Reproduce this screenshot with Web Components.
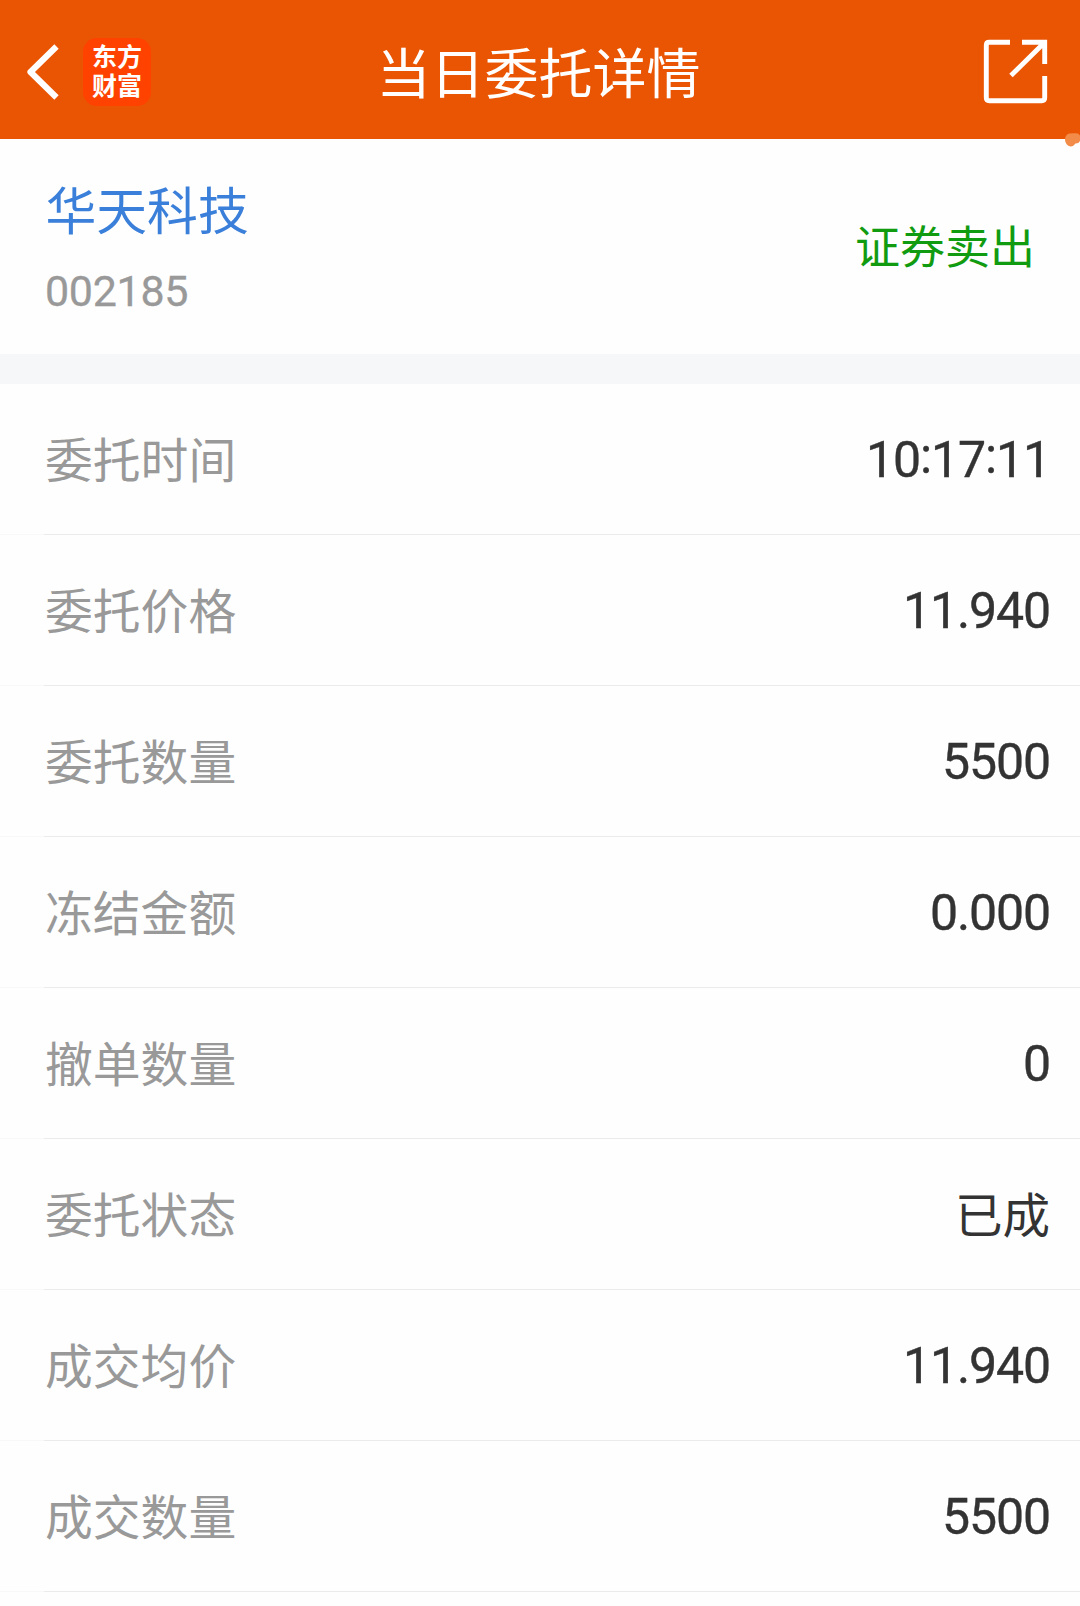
<!DOCTYPE html>
<html lang="zh-CN">
<head>
<meta charset="UTF-8">
<title>当日委托详情</title>
<style>
    body {
        margin: 0;
        background: #fefefe;
        color: #333;
        font-family: Roboto, "Noto Sans CJK SC", sans-serif;
    }
</style>
</head>
<body>
<order-page>
    <nav-bar slot="header">当日委托详情</nav-bar>
    <stock-summary name="华天科技" code="002185">证券卖出</stock-summary>
    <detail-row label="委托时间">10<raised-colon>:</raised-colon>17<raised-colon>:</raised-colon>11</detail-row>
    <detail-row label="委托价格">11.940</detail-row>
    <detail-row label="委托数量">5500</detail-row>
    <detail-row label="冻结金额">0.000</detail-row>
    <detail-row label="撤单数量">0</detail-row>
    <detail-row label="委托状态" cjk>已成</detail-row>
    <detail-row label="成交均价">11.940</detail-row>
    <detail-row label="成交数量">5500</detail-row>
</order-page>

<script>
class OrderPage extends HTMLElement {
    constructor() {
        super();
        const shadow = this.attachShadow({ mode: 'open' });
        shadow.innerHTML = `
            <style>
                :host {
                    display: flex;
                    flex-direction: column;
                    height: 1606px;
                    overflow: hidden;
                }
            </style>
            <slot name="header"></slot>
            <slot></slot>
        `;
    }
}

class AppLogo extends HTMLElement {
    constructor() {
        super();
        const shadow = this.attachShadow({ mode: 'open' });
        shadow.innerHTML = `
            <style>
                :host {
                    display: flex;
                    align-items: center;
                    justify-content: center;
                    box-sizing: border-box;
                    width: 68px;
                    height: 68px;
                    padding-bottom: 3px;
                    border-radius: 14px;
                    background: #ff4200;
                    color: #fff;
                    font: 700 25px/29px "Noto Sans CJK SC", sans-serif;
                }
                /* 两字一行 */
                span {
                    width: 50px;
                    word-break: break-all;
                }
            </style>
            <span>东方财富</span>
        `;
    }
}

class NavBar extends HTMLElement {
    constructor() {
        super();
        const shadow = this.attachShadow({ mode: 'open' });
        shadow.innerHTML = `
            <style>
                :host {
                    position: relative;
                    display: grid;
                    grid-template-columns: 1fr auto 1fr;
                    align-items: center;
                    flex: none;
                    box-sizing: border-box;
                    height: 139px;
                    padding: 4px 31px 0 25px;
                    background: #ea5504;
                    color: #fff;
                }
                .left {
                    display: flex;
                    align-items: center;
                    gap: 22px;
                }
                h1 {
                    margin: 0;
                    padding: 0 0 2px 3px;
                    font: 400 54px/80px "Noto Sans CJK SC", sans-serif;
                }
                svg {
                    display: block;
                    fill: none;
                    stroke: #fff;
                }
                .share {
                    justify-self: end;
                }
                /* 右下角的小圆点，压在导航栏边缘上 */
                .dot {
                    position: absolute;
                    right: 0;
                    bottom: -8px;
                }
            </style>
            <div class="left">
                <svg width="36" height="56" viewBox="0 0 36 56" stroke-width="6.2" stroke-linejoin="round">
                    <path d="M31.5 2.5 L5.5 28 L31.5 53.5" />
                </svg>
                <app-logo></app-logo>
            </div>
            <h1><slot></slot></h1>
            <svg class="share" width="66" height="66" viewBox="0 0 66 66" stroke-width="4.9">
                <path d="M27 3.3 H6.3 Q3.3 3.3 3.3 6.3 V58.7 Q3.3 61.7 6.3 61.7 H58.7 Q61.7 61.7 61.7 58.7 V37" />
                <path d="M39 3.3 H61.7 V25 M61 4 L28 36.5" />
            </svg>
            <svg class="dot" width="15" height="14" viewBox="0 0 15 14">
                <path stroke="none" fill="#f28c48" d="M4 0.6 Q9 0 13 0.4 L15 2.5 V8 Q14 10.5 10.5 10.6 Q8.5 13.6 5.5 13.4 Q0.5 12.5 0 7 Q0 2 4 0.6Z" />
            </svg>
        `;
    }
}

class StockSummary extends HTMLElement {
    constructor() {
        super();
        const shadow = this.attachShadow({ mode: 'open' });
        shadow.innerHTML = `
            <style>
                :host {
                    display: flex;
                    align-items: center;
                    justify-content: space-between;
                    flex: none;
                    box-sizing: border-box;
                    height: 245px;
                    padding: 0 45px;
                    border-bottom: 30px solid #f6f7f9;
                }
                .name {
                    padding-left: 0.5px;
                    color: #3a7fd9;
                    font: 400 50.8px/76px "Noto Sans CJK SC", sans-serif;
                }
                .code {
                    margin-top: 13px;
                    color: #999;
                    font-size: 43px;
                    line-height: 64px;
                    letter-spacing: -0.3px;
                    -webkit-text-stroke: 0.3px;
                }
                .side {
                    padding-bottom: 4px;
                    color: #119b11;
                    font: 400 45px/68px "Noto Sans CJK SC", sans-serif;
                }
            </style>
            <div>
                <div class="name"></div>
                <div class="code"></div>
            </div>
            <div class="side"><slot></slot></div>
        `;
    }

    connectedCallback() {
        this.shadowRoot.querySelector('.name').textContent = this.getAttribute('name');
        this.shadowRoot.querySelector('.code').textContent = this.getAttribute('code');
    }
}

class DetailRow extends HTMLElement {
    constructor() {
        super();
        const shadow = this.attachShadow({ mode: 'open' });
        shadow.innerHTML = `
            <style>
                :host {
                    display: flex;
                    align-items: center;
                    justify-content: space-between;
                    flex: none;
                    box-sizing: border-box;
                    height: 151px;
                    padding: 0 30px 0 45px;
                    border-bottom: 1px solid;
                    border-image: linear-gradient(to right, #f8f8f8 45px, #ebebeb 45px) 1;
                }
                .label {
                    padding-bottom: 2px;
                    color: #999;
                    font: 400 47.8px/72px "Noto Sans CJK SC", sans-serif;
                }
                .value {
                    padding-top: 2px;
                    font-size: 50px;
                    line-height: 72px;
                    letter-spacing: -1.1px;
                    -webkit-text-stroke: 0.4px;
                }
                :host([cjk]) .value {
                    padding: 0 0 2px;
                    font: 400 47.5px/72px "Noto Sans CJK SC", sans-serif;
                    letter-spacing: 0;
                    -webkit-text-stroke: 0;
                }
            </style>
            <span class="label"></span>
            <span class="value"><slot></slot></span>
        `;
    }

    connectedCallback() {
        this.shadowRoot.querySelector('.label').textContent = this.getAttribute('label');
    }
}

// 时间里的冒号比基线略高，标记里不留空白以免撑宽
class RaisedColon extends HTMLElement {
    constructor() {
        super();
        const shadow = this.attachShadow({ mode: 'open' });
        shadow.innerHTML = '<style>:host { display: inline; vertical-align: 4px; line-height: 0; }</style><slot></slot>';
    }
}

customElements.define('order-page', OrderPage);
customElements.define('app-logo', AppLogo);
customElements.define('nav-bar', NavBar);
customElements.define('stock-summary', StockSummary);
customElements.define('detail-row', DetailRow);
customElements.define('raised-colon', RaisedColon);
</script>
</body>
</html>
